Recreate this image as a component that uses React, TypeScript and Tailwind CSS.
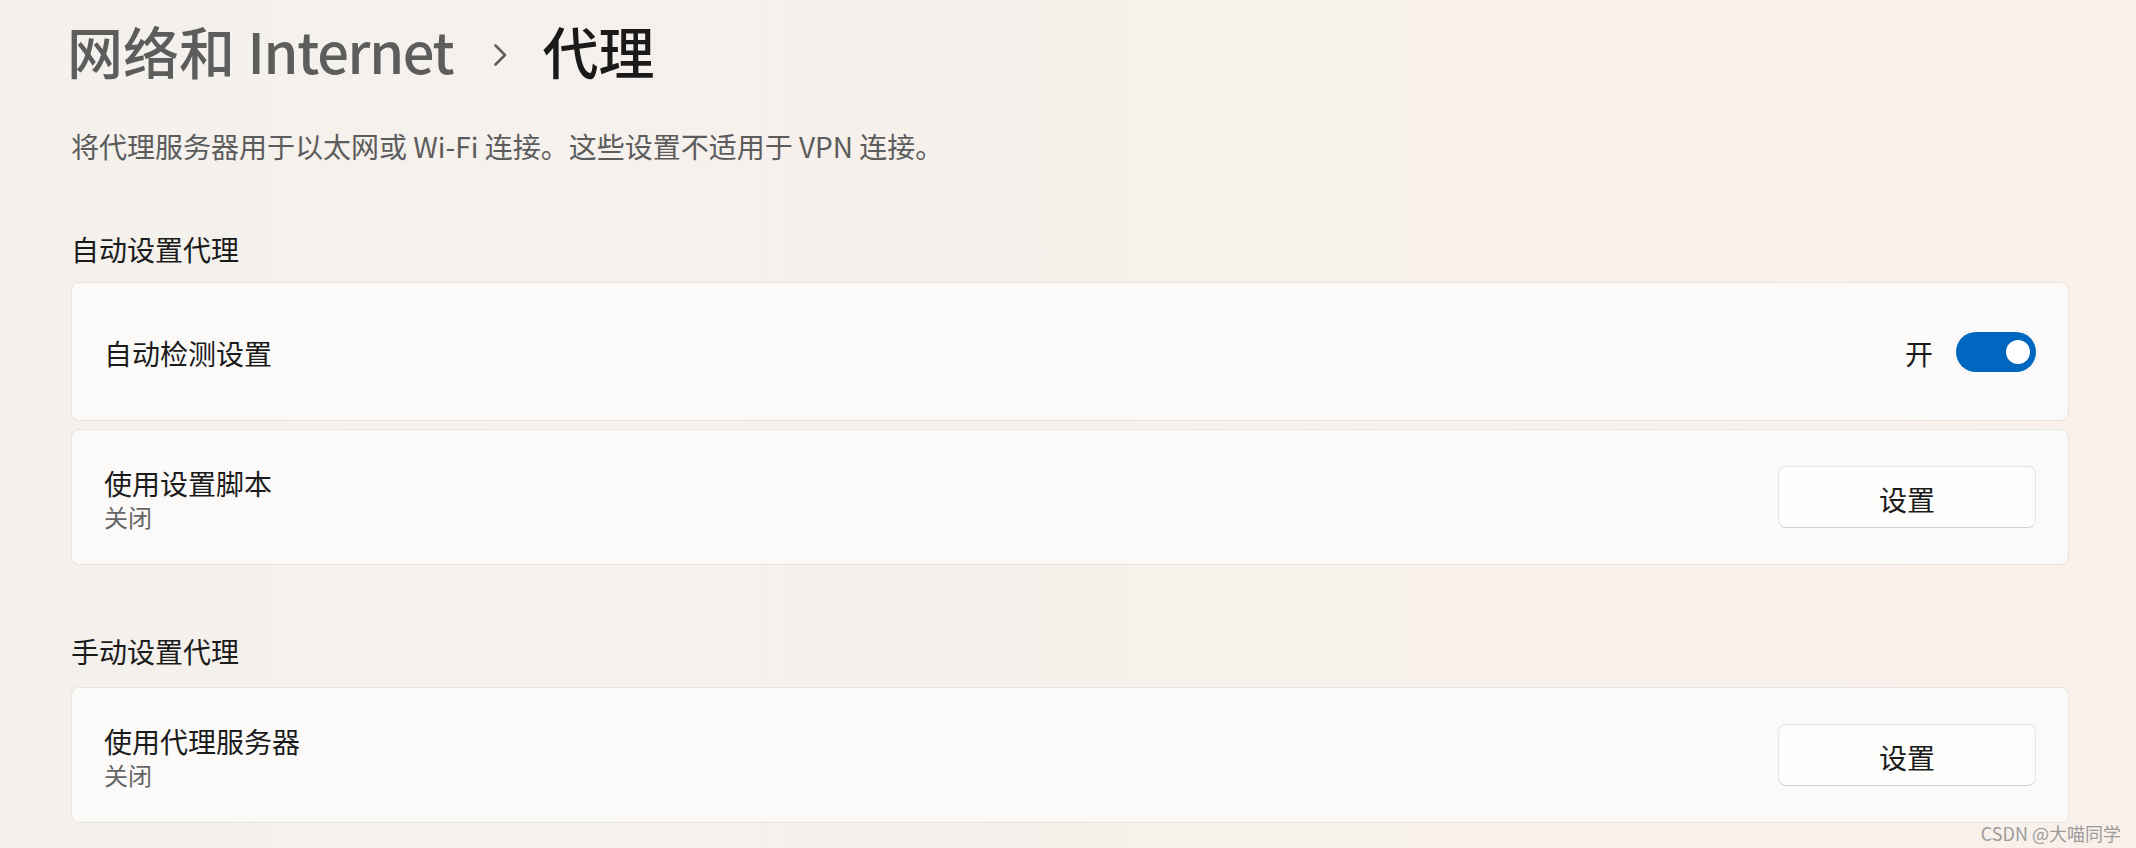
import React from "react";

const FONT = { fontFamily: '"Noto Sans CJK SC", "Noto Sans", sans-serif' };

function Toggle() {
  return (
    <div className="flex h-[40px] w-[80px] items-center justify-end rounded-full bg-[#0067c0] pr-[6px]">
      <div className="h-[24px] w-[24px] rounded-full bg-white" />
    </div>
  );
}

function SetButton() {
  return (
    <button className="flex h-[62px] w-[258px] items-center justify-center rounded-[8px] border border-[#e5e5e5] border-b-[#d0d0d0] bg-[#fdfdfc] text-[28px] leading-none text-[#1b1b1b]">
      <span className="mt-[3px]">设置</span>
    </button>
  );
}

function Card({ children, h }: { children: React.ReactNode; h: string }) {
  return (
    <div
      className={`flex ${h} items-center justify-between rounded-[8px] border border-[#e7e3df] bg-[#fbfaf9] px-[32px]`}
    >
      {children}
    </div>
  );
}

function TwoLine({ title }: { title: string }) {
  return (
    <div className="mt-[4px] flex flex-col">
      <span className="text-[28px] leading-[28px] text-[#1b1b1b]">{title}</span>
      <span className="mt-[8px] text-[24px] leading-[24px] text-[#666666]">关闭</span>
    </div>
  );
}

export default function App() {
  return (
    <div
      style={FONT}
      className="relative h-[848px] w-full overflow-hidden bg-linear-to-r from-[#f4f1ed] to-[#f9f0ea] pt-[22px] pl-[71px] pr-[67px]"
    >
      <div className="-ml-[4px] flex items-start text-[56px] leading-none font-medium">
        <span className="text-[#5d5d5d]">
          网络和 <span className="tracking-[-1.3px]">Internet</span>
        </span>
        <svg
          className="ml-[40px] mt-[22px]"
          width="14"
          height="22"
          viewBox="0 0 14 22"
          fill="none"
        >
          <polyline
            points="2.5,1.5 12,11 2.5,20.5"
            stroke="#5f5f5f"
            strokeWidth="2.6"
            strokeLinecap="round"
            strokeLinejoin="round"
          />
        </svg>
        <span className="ml-[35px] text-[#1a1a1a]">代理</span>
      </div>

      <div className="mt-[54px] text-[28px] leading-none text-[#5c5c5c]">
        将代理服务器用于以太网或 Wi-Fi 连接。这些设置不适用于 VPN 连接。
      </div>

      <div className="mt-[75px] text-[28px] leading-none text-[#1b1b1b]">自动设置代理</div>

      <div className="mt-[19px] flex flex-col gap-[8px]">
        <Card h="h-[139px]">
          <span className="mt-[3px] text-[28px] leading-[28px] text-[#1b1b1b]">自动检测设置</span>
          <div className="flex items-center gap-[23px]">
            <span className="mt-[3px] text-[28px] leading-[28px] text-[#1b1b1b]">开</span>
            <Toggle />
          </div>
        </Card>
        <Card h="h-[136px]">
          <TwoLine title="使用设置脚本" />
          <SetButton />
        </Card>
      </div>

      <div className="mt-[72px] text-[28px] leading-none text-[#1b1b1b]">手动设置代理</div>

      <div className="mt-[22px] flex flex-col">
        <Card h="h-[136px]">
          <TwoLine title="使用代理服务器" />
          <SetButton />
        </Card>
      </div>

      <div className="absolute bottom-[6px] right-[15px] text-[18px] leading-none text-[#9c9c9c]">
        CSDN @大喵同学
      </div>
    </div>
  );
}
